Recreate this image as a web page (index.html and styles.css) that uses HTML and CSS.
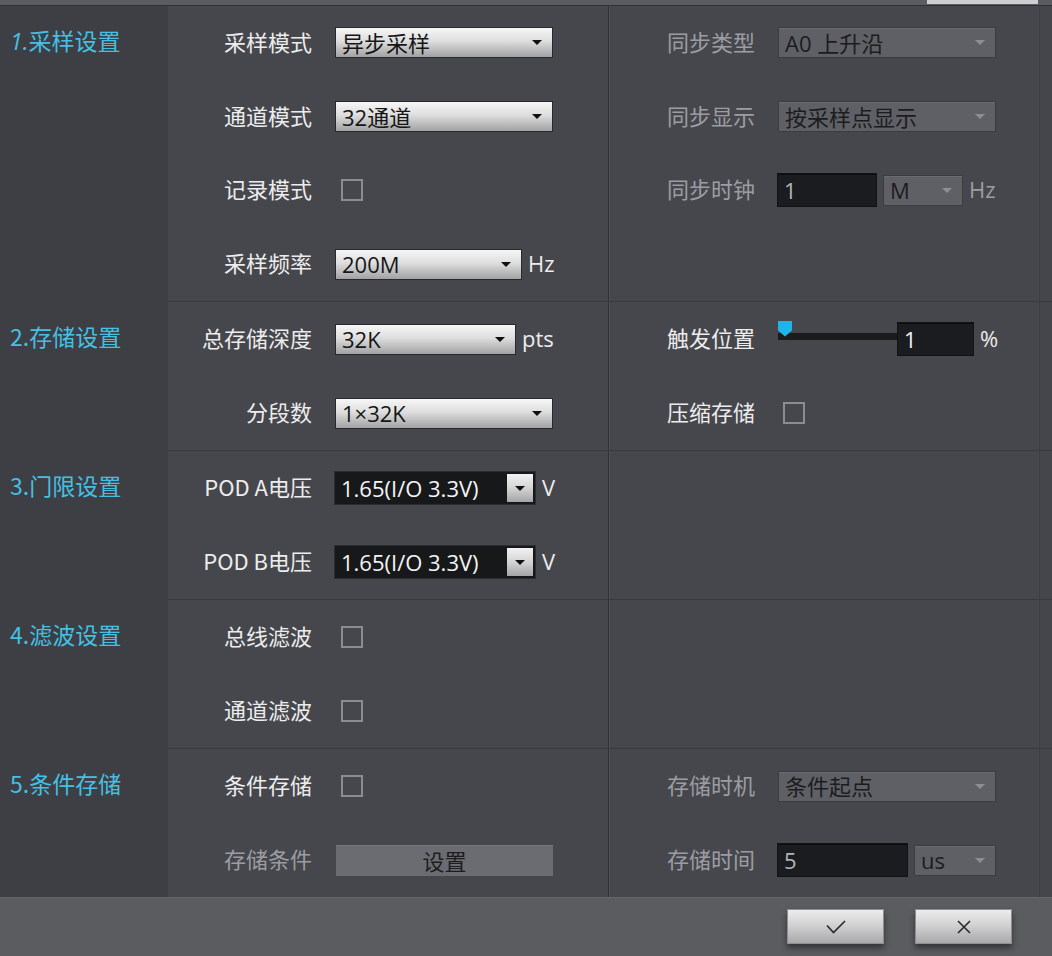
FILE: index.html
```html
<!DOCTYPE html>
<html lang="zh-CN">
<head>
  <meta charset="UTF-8">
  <meta name="viewport" content="width=device-width, initial-scale=1.0">
  <title>采集设置</title>
  <link rel="stylesheet" href="styles.css">
</head>
<body>
  <div class="topbar"><span class="topbar-tab"></span></div>

  <div class="panel">
    <!-- 1. sampling -->
    <section class="group group-first">
      <div class="group-title"><i>1.</i>采样设置</div>
      <div class="col col-main">
        <div class="row">
          <span class="lbl">采样模式</span>
          <div class="combo w218"><span>异步采样</span><b class="arrow"></b></div>
        </div>
        <div class="row">
          <span class="lbl">通道模式</span>
          <div class="combo w218"><span>32通道</span><b class="arrow"></b></div>
        </div>
        <div class="row">
          <span class="lbl">记录模式</span>
          <span class="check"></span>
        </div>
        <div class="row">
          <span class="lbl">采样频率</span>
          <div class="combo w187"><span>200M</span><b class="arrow"></b></div>
          <span class="unit">Hz</span>
        </div>
      </div>
      <div class="col col-side">
        <div class="row">
          <span class="lbl off">同步类型</span>
          <div class="combo off w218"><span>A0 上升沿</span><b class="arrow"></b></div>
        </div>
        <div class="row">
          <span class="lbl off">同步显示</span>
          <div class="combo off w218"><span>按采样点显示</span><b class="arrow"></b></div>
        </div>
        <div class="row">
          <span class="lbl off">同步时钟</span>
          <div class="field off w100">1</div>
          <div class="combo off w80 gap6"><span>M</span><b class="arrow"></b></div>
          <span class="unit off">Hz</span>
        </div>
        <div class="row"></div>
      </div>
    </section>

    <!-- 2. storage -->
    <section class="group">
      <div class="group-title">2.存储设置</div>
      <div class="col col-main">
        <div class="row">
          <span class="lbl">总存储深度</span>
          <div class="combo w181"><span>32K</span><b class="arrow"></b></div>
          <span class="unit">pts</span>
        </div>
        <div class="row">
          <span class="lbl">分段数</span>
          <div class="combo w218"><span>1×32K</span><b class="arrow"></b></div>
        </div>
      </div>
      <div class="col col-side">
        <div class="row">
          <span class="lbl">触发位置</span>
          <div class="slider">
            <div class="slider-track"></div>
            <span class="slider-thumb"></span>
          </div>
          <div class="field w77">1</div>
          <span class="unit">%</span>
        </div>
        <div class="row">
          <span class="lbl">压缩存储</span>
          <span class="check"></span>
        </div>
      </div>
    </section>

    <!-- 3. threshold -->
    <section class="group">
      <div class="group-title">3.门限设置</div>
      <div class="col col-main">
        <div class="row">
          <span class="lbl">POD A电压</span>
          <div class="spin"><span>1.65(I/O 3.3V)</span><b class="spin-btn"><b class="arrow"></b></b></div>
          <span class="unit">V</span>
        </div>
        <div class="row">
          <span class="lbl">POD B电压</span>
          <div class="spin"><span>1.65(I/O 3.3V)</span><b class="spin-btn"><b class="arrow"></b></b></div>
          <span class="unit">V</span>
        </div>
      </div>
      <div class="col col-side"></div>
    </section>

    <!-- 4. filter -->
    <section class="group">
      <div class="group-title">4.滤波设置</div>
      <div class="col col-main">
        <div class="row">
          <span class="lbl">总线滤波</span>
          <span class="check"></span>
        </div>
        <div class="row">
          <span class="lbl">通道滤波</span>
          <span class="check"></span>
        </div>
      </div>
      <div class="col col-side"></div>
    </section>

    <!-- 5. conditional storage -->
    <section class="group">
      <div class="group-title">5.条件存储</div>
      <div class="col col-main">
        <div class="row">
          <span class="lbl">条件存储</span>
          <span class="check"></span>
        </div>
        <div class="row">
          <span class="lbl off">存储条件</span>
          <div class="flat-btn">设置</div>
        </div>
      </div>
      <div class="col col-side">
        <div class="row">
          <span class="lbl off">存储时机</span>
          <div class="combo off w218"><span>条件起点</span><b class="arrow"></b></div>
        </div>
        <div class="row">
          <span class="lbl off">存储时间</span>
          <div class="field off w131">5</div>
          <div class="combo off w82 gap6"><span>us</span><b class="arrow"></b></div>
        </div>
      </div>
    </section>
  </div>

  <div class="footer">
    <button class="dlg-btn" type="button" title="确定">
      <svg width="20" height="14" viewBox="0 0 20 14"><path d="M1 5.5 L7.5 12.5 L19 1" fill="none" stroke="#2a2a2a" stroke-width="1.6"/></svg>
    </button>
    <button class="dlg-btn" type="button" title="取消">
      <svg width="14" height="14" viewBox="0 0 14 14"><path d="M1 1 L13 13 M13 1 L1 13" fill="none" stroke="#2a2a2a" stroke-width="1.6"/></svg>
    </button>
  </div>
</body>
</html>
```

FILE: styles.css
```css
body {
  margin: 0;
  width: 1052px;
  height: 956px;
  overflow: hidden;
  background: #46474c;
  font-family: "Open Sans", "Noto Sans CJK SC", sans-serif;
  font-size: 22px;
  color: #ececec;
}
.topbar {
  height: 5px;
  background: #5b5c61;
  border-bottom: 1px solid #303135;
  position: relative;
}
.topbar-tab {
  position: absolute;
  left: 927px;
  top: 0;
  width: 111px;
  height: 4px;
  background: #cfcfd1;
}
.group {
  display: grid;
  grid-template-columns: 168px 441px 1fr;
  height: 149px;
}
.group-first {
  height: 295px;
}
.group-title {
  background: #3e3f44;
  line-height: 70px;
  padding-left: 10px;
  color: #45bfe2;
  font-family: "Noto Sans CJK SC", sans-serif;
  font-size: 23px;
}
.group-title i {
  font-family: "Open Sans", sans-serif;
  font-style: italic;
}
.group-first .group-title {
  line-height: 69px;
}
.col {
  display: flex;
  flex-direction: column;
}
.group + .group .col {
  border-top: 1px solid #393a3e;
}
.col-main {
  border-right: 1px solid #313236;
}
.col-side {
  box-shadow: inset 1px 0 #505156, inset -12px 0 #45464b, inset -13px 0 #3d3e42;
}
.row {
  flex: 1;
  display: flex;
  align-items: center;
}
.lbl {
  font-family: "Noto Sans CJK SC", sans-serif;
  text-align: right;
  margin-right: 23px;
  padding-bottom: 4px;
  white-space: nowrap;
}
.col-main .lbl {
  width: 144px;
}
.col-side .lbl {
  width: 146px;
}
.lbl.off, .unit.off {
  color: #9c9da2;
}
.unit {
  margin-left: 6px;
  padding-bottom: 2px;
}

/* drop-down boxes */
.combo {
  height: 31px;
  box-sizing: border-box;
  border: 1px solid #2a2a2c;
  background: linear-gradient(#f6f6f6, #dedede 45%, #b2b2b4 85%, #a2a2a4);
  color: #161616;
  display: flex;
  align-items: center;
  justify-content: space-between;
  padding: 0 10px 0 6px;
  line-height: 1;
}
.combo.off {
  background: #5f6066;
  border-color: #3b3c40;
  box-shadow: inset 0 1px #6a6b70;
  color: #1c1c1e;
}
.arrow {
  width: 0;
  height: 0;
  border-left: 5px solid transparent;
  border-right: 5px solid transparent;
  border-top: 5px solid #111;
}
.combo.off .arrow {
  border-top-color: #8d8e93;
}
.w218 { width: 218px; }
.w187 { width: 187px; }
.w181 { width: 181px; }
.w100 { width: 100px; }
.w80 { width: 80px; }
.w82 { width: 82px; }
.w77 { width: 77px; }
.w131 { width: 131px; }
.gap6 { margin-left: 6px; }

/* dark text fields */
.field {
  height: 34px;
  box-sizing: border-box;
  background: #1b1c1f;
  border: 1px solid #121214;
  box-shadow: inset 0 1px #0e0e10;
  padding-left: 6px;
  display: flex;
  align-items: center;
  line-height: 1;
  color: #f2f2f2;
}
.field.off {
  color: #b4b4b8;
  margin-left: -1px;
}

.check {
  width: 18px;
  height: 18px;
  border: 2px solid #8b8c90;
  margin-left: 6px;
}
.col-side .check {
  margin-left: 5px;
}

/* trigger position slider */
.slider {
  width: 119px;
  height: 35px;
  box-sizing: border-box;
  padding-top: 12px;
  position: relative;
  margin-top: -2px;
}
.slider-track {
  height: 7px;
  background: #1b1b1d;
}
.slider-thumb {
  position: absolute;
  left: 0;
  top: 0;
  width: 14px;
  height: 16px;
  background: #1fb3e8;
  clip-path: polygon(0 0, 100% 0, 100% 62%, 50% 100%, 0 62%);
}

/* voltage spin box */
.spin {
  width: 202px;
  height: 34px;
  box-sizing: border-box;
  margin-left: -1px;
  background: #17181a;
  border: 1px solid #2c2d30;
  display: flex;
  align-items: center;
  justify-content: space-between;
  padding: 0 2px 0 6px;
  color: #f4f4f4;
  line-height: 1;
}
.spin-btn {
  width: 26px;
  height: 28px;
  background: linear-gradient(#f2f2f2, #d4d4d4 50%, #a4a4a6);
  display: flex;
  align-items: center;
  justify-content: center;
}

.flat-btn {
  width: 217px;
  height: 31px;
  margin-left: 1px;
  background: #6b6c71;
  box-shadow: inset 0 1px #76777c;
  color: #1d1d1f;
  font-family: "Noto Sans CJK SC", sans-serif;
  display: flex;
  align-items: center;
  justify-content: center;
  line-height: 1;
}

/* dialog footer */
.footer {
  height: 59px;
  box-sizing: border-box;
  background: #5b5c60;
  border-top: 1px solid #65666a;
  display: flex;
  justify-content: flex-end;
  align-items: flex-start;
  gap: 31px;
  padding: 11px 40px 0 0;
}
.dlg-btn {
  width: 97px;
  height: 35px;
  border: 1px solid #8e8e90;
  background: linear-gradient(#ececec, #d2d2d2 45%, #a9a9ab);
  box-shadow: 0 4px 6px rgba(0, 0, 0, 0.45);
  display: flex;
  align-items: center;
  justify-content: center;
  padding: 0;
}
```
